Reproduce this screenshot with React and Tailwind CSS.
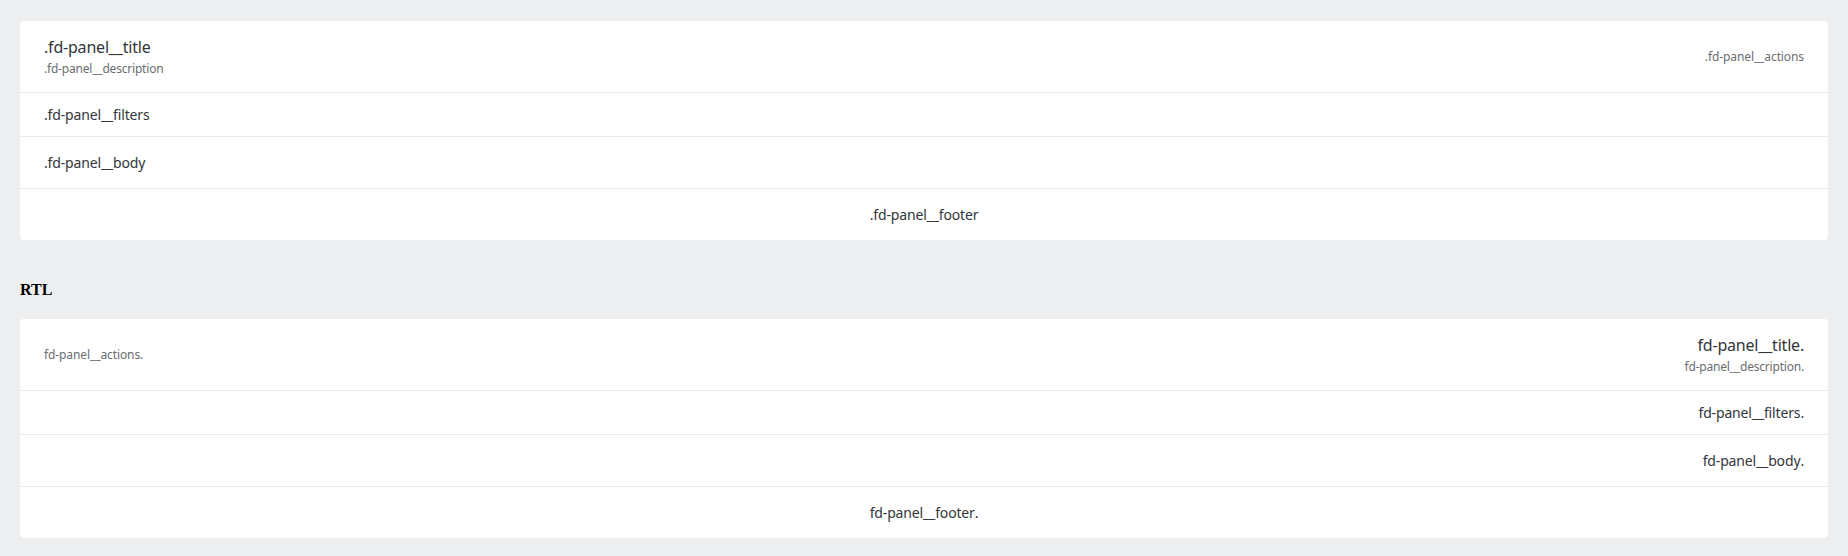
export default function App() {
  const font = { fontFamily: '"Noto Sans", "Open Sans", sans-serif' };
  const Panel = ({ rtl }) => {
    return (
      <div dir={rtl ? "rtl" : "ltr"} className="bg-white rounded-[4px] text-[#32363a]" style={font}>
        <div className="flex items-center justify-between px-6 h-[72px] border-b border-[#e9eaeb]">
          <div className="flex flex-col">
            <div className="text-[16px] leading-[20px] tracking-[-0.2px]">.fd-panel__title</div>
            <div className="text-[12px] leading-[16px] text-[#6a6d70] mt-[4px] tracking-[-0.2px]">.fd-panel__description</div>
          </div>
          <div className="text-[12px] text-[#6a6d70] tracking-[-0.1px]">.fd-panel__actions</div>
        </div>
        <div className="flex items-center px-6 h-[44px] border-b border-[#e9eaeb] text-[14px] tracking-[-0.15px]">.fd-panel__filters</div>
        <div className="flex items-center px-6 h-[52px] border-b border-[#e9eaeb] text-[14px] tracking-[-0.15px]">.fd-panel__body</div>
        <div className="flex items-center justify-center px-6 h-[51px] text-[14px] tracking-[-0.15px]">.fd-panel__footer</div>
      </div>
    );
  };
  return (
    <div className="min-h-[556px] bg-[#edeef0] px-5 pt-[21px] pb-5">
      <Panel />
      <h3 className="mt-[38px] mb-[17px] text-[16px] leading-[24px] font-bold text-black" style={{ fontFamily: '"Liberation Serif", serif' }}>RTL</h3>
      <Panel rtl />
    </div>
  );
}
